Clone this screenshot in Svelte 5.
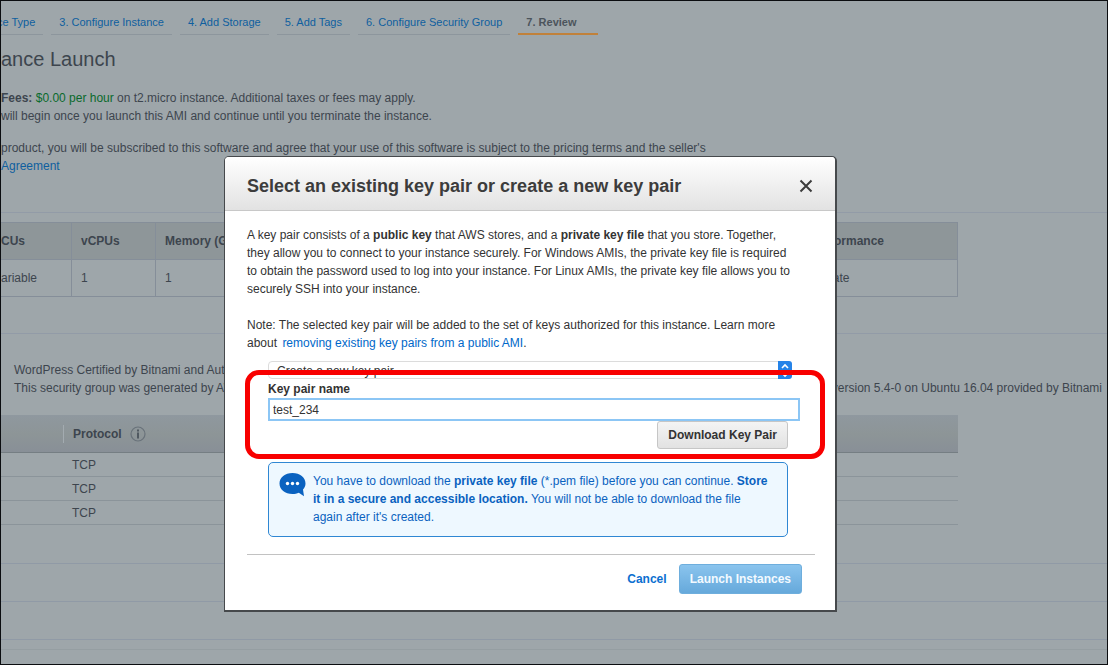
<script lang="ts">
  const steps = ['3. Configure Instance', '4. Add Storage', '5. Add Tags', '6. Configure Security Group'];
  const rules = ['TCP', 'TCP', 'TCP'];

  let option = $state('create');
  let keyName = $state('test_234');
</script>

<div class="page">
  <nav class="steps">
    <a class="first" href="#type">ce Type</a>
    {#each steps as step}
      <a href="#step">{step}</a>
    {/each}
    <a class="active" href="#review">7. Review</a>
  </nav>

  <h1>ance Launch</h1>

  <p class="fees">
    <strong>Fees:</strong> <span class="price">$0.00 per hour</span> on t2.micro instance. Additional taxes or fees may apply.<br />
    will begin once you launch this AMI and continue until you terminate the instance.
  </p>
  <p class="terms">
    product, you will be subscribed to this software and agree that your use of this software is subject to the pricing terms and the seller's<br />
    <a href="#agreement">Agreement</a>
  </p>

  <section class="instance">
    <table class="types">
      <thead>
        <tr><th class="c1">CUs</th><th class="c2">vCPUs</th><th>Memory (GiB)</th><th class="c4">Network Performance</th></tr>
      </thead>
      <tbody>
        <tr><td>ariable</td><td>1</td><td>1</td><td>Low to Moderate</td></tr>
      </tbody>
    </table>
  </section>

  <section class="security">
    <div class="group">
      <div>WordPress Certified by Bitnami and Automattic</div>
      <div class="split">
        <span>This security group was generated by AWS</span>
        <span>version 5.4-0 on Ubuntu 16.04 provided by Bitnami</span>
      </div>
    </div>
    <table class="rules">
      <thead>
        <tr>
          <th class="type"></th>
          <th>
            <span class="protocol">
              Protocol
              <svg width="16" height="16" viewBox="0 0 16 16" aria-hidden="true">
                <circle cx="8" cy="8" r="7" fill="none" stroke="#69727a" stroke-width="1.2" />
                <rect x="7" y="3.500" width="2" height="2" fill="#505961" />
                <rect x="7" y="6.500" width="2" height="6" fill="#505961" />
              </svg>
            </span>
          </th>
        </tr>
      </thead>
      <tbody>
        {#each rules as rule}
          <tr><td></td><td>{rule}</td></tr>
        {/each}
      </tbody>
    </table>
  </section>

  <div class="fold"></div>
  <div class="fold"></div>
  <div class="fold last"></div>

  <div class="overlay">
    <div class="dialog" role="dialog" aria-labelledby="dialog-title">
      <header>
        <h2 id="dialog-title">Select an existing key pair or create a new key pair</h2>
        <button class="close" aria-label="Close">
          <svg width="14" height="14" viewBox="0 0 14 14">
            <path d="M1.5 1.5L12.5 12.5M12.5 1.5L1.5 12.5" stroke="#3c3c3c" stroke-width="2" />
          </svg>
        </button>
      </header>

      <div class="body">
        <p>
          A key pair consists of a <strong>public key</strong> that AWS stores, and a <strong>private key file</strong> that you store. Together,<br />
          they allow you to connect to your instance securely. For Windows AMIs, the private key file is required<br />
          to obtain the password used to log into your instance. For Linux AMIs, the private key file allows you to<br />
          securely SSH into your instance.
        </p>
        <p>
          Note: The selected key pair will be added to the set of keys authorized for this instance. Learn more<br />
          about <a href="#remove">removing existing key pairs from a public AMI</a>.
        </p>

        <form onsubmit={(e) => e.preventDefault()}>
          <div class="select">
            <select bind:value={option} aria-label="Key pair option">
              <option value="create">Create a new key pair</option>
              <option value="existing">Choose an existing key pair</option>
            </select>
            <svg width="14" height="18" viewBox="0 0 14 18" aria-hidden="true">
              <path d="M0 0H11Q14 0 14 3V15Q14 18 11 18H0Z" fill="#2583e8" />
              <path d="M4 7L7 4L10 7M4 12L7 15L10 12" fill="none" stroke="#fff" stroke-width="1.6" />
            </svg>
          </div>
          <label for="key-name">Key pair name</label>
          <input id="key-name" type="text" bind:value={keyName} />
          <button class="download" type="button">Download Key Pair</button>
          <div class="highlight"></div>
        </form>

        <div class="notice">
          <svg width="27" height="25" viewBox="0 0 27 25" aria-hidden="true">
            <path d="M13.5 1C6 1 .5 5.4 .5 11.5S6 22 13.5 22C15.8 22 18 21.6 19.8 20.7L25 24.2L24 17.5C25.6 15.8 26.5 13.7 26.5 11.5C26.5 5.4 21 1 13.5 1Z" fill="#0a62c0" />
            <circle cx="8.5" cy="11.5" r="1.7" fill="#fff" />
            <circle cx="13.5" cy="11.5" r="1.7" fill="#fff" />
            <circle cx="18.5" cy="11.5" r="1.7" fill="#fff" />
          </svg>
          <p>
            You have to download the <strong>private key file</strong> (*.pem file) before you can continue. <strong>Store<br />
            it in a secure and accessible location.</strong> You will not be able to download the file<br />
            again after it's created.
          </p>
        </div>

        <footer>
          <button class="cancel">Cancel</button>
          <button class="launch">Launch Instances</button>
        </footer>
      </div>
    </div>
  </div>
</div>

<style>
  :global(body) {
    margin: 0;
    background: #9ea6aa;
  }

  .page {
    position: relative;
    box-sizing: border-box;
    min-height: 100vh;
    overflow: hidden;
    border: 1px solid #0b0d10;
    background: #9ea6aa;
    color: #3d454e;
    font: 12px/18px 'Liberation Sans', Arial, sans-serif;
  }

  p,
  h1,
  h2 {
    margin: 0;
  }

  a {
    color: #0f5f9f;
    text-decoration: none;
  }

  button,
  input,
  select {
    font: inherit;
    color: inherit;
  }

  button {
    cursor: pointer;
  }

  /* Wizard steps */
  .steps {
    display: flex;
    gap: 8px;
    margin-left: -4px;
    font-size: 11px;
  }

  .steps a {
    padding: 12px 8px 2px;
    border-bottom: 1px solid #8d969d;
    white-space: nowrap;
  }

  .steps .first {
    padding-left: 0;
  }

  .steps .active {
    padding-right: 22px;
    border-bottom: 2px solid #c1813a;
    color: #4c545c;
    font-weight: bold;
  }

  h1 {
    margin-top: 12px;
    font-size: 20px;
    font-weight: normal;
    line-height: 24px;
  }

  .fees {
    margin-top: 18px;
  }

  .price {
    color: #0a6a2c;
  }

  .terms {
    margin-top: 14px;
    white-space: nowrap;
  }

  table {
    width: 957px;
    border-collapse: collapse;
    table-layout: fixed;
  }

  th,
  td {
    padding: 0 9px;
    text-align: left;
    white-space: nowrap;
  }

  .instance {
    margin-top: 37px;
    padding: 9px 0 36px;
    border-top: 1px solid #929ba7;
  }

  .types th,
  .types td {
    height: 36px;
    border: 1px solid #858e99;
  }

  .types tr > :first-child {
    padding-left: 0;
    border-left: none;
  }

  .types th {
    background: #8e9699;
  }

  .types .c1 {
    width: 61px;
  }

  .types .c2 {
    width: 65px;
  }

  .types .c4 {
    width: 188px;
  }

  .security {
    padding: 27px 0 1px;
    border-top: 1px solid #929ba7;
  }

  .group {
    padding: 0 5px 0 13px;
  }

  .split {
    display: flex;
    justify-content: space-between;
  }

  .rules {
    margin-top: 18px;
  }

  .rules thead {
    background: linear-gradient(#8f989f, #8d9597 50%, #888f97);
  }

  .rules th {
    height: 37px;
    padding: 0;
    border-bottom: 1px solid #757e83;
  }

  .rules .type {
    width: 62px;
  }

  .rules td {
    height: 23px;
    border-bottom: 1px solid #8b949a;
  }

  .protocol {
    display: flex;
    align-items: center;
    gap: 8px;
    padding-left: 9px;
    border-left: 1px solid #a3abb0;
  }

  .fold {
    height: 37px;
    border-bottom: 1px solid #909aa6;
  }

  .fold.last {
    box-shadow: 0 9px #9ea6aa, 0 10px #959ea2;
  }

  /* Key pair dialog */
  .overlay {
    position: absolute;
    inset: 0;
    padding: 155px 270px 52px 223px;
  }

  .dialog {
    border: 2px solid #46494c;
    border-width: 1px 2px 2px 1px;
    border-radius: 5px 5px 0 0;
    background: #fff;
    color: #333;
  }

  header {
    display: flex;
    align-items: center;
    justify-content: space-between;
    height: 54px;
    padding: 5px 22px 0;
    box-sizing: border-box;
    border-bottom: 1px solid #c8c8c8;
    border-radius: 4px 4px 0 0;
    background: linear-gradient(#fff, #e2e2e2);
  }

  h2 {
    color: #3c3c3c;
    font-size: 18px;
    line-height: 24px;
  }

  .close {
    display: flex;
    padding: 0;
    border: none;
    background: none;
  }

  .body {
    padding: 15px 20px 16px 22px;
  }

  .body p + p {
    margin-top: 18px;
  }

  .body a {
    margin-left: 2px;
    color: #0068c9;
  }

  form {
    position: relative;
    display: flex;
    flex-direction: column;
    margin: 9px 15px 0 21px;
  }

  .select {
    position: relative;
    display: flex;
    margin-right: 8px;
  }

  select {
    width: 100%;
    height: 18px;
    padding: 0 8px;
    border: 1px solid #dcdcdc;
    border-radius: 4px;
    background: #fff;
    appearance: none;
  }

  .select svg {
    position: absolute;
    top: 0;
    right: 0;
    pointer-events: none;
  }

  label {
    margin-top: 1px;
    font-weight: bold;
  }

  input {
    box-sizing: border-box;
    height: 23px;
    padding: 0 3px;
    border: 2px solid #8cc6f5;
    outline: none;
  }

  .download {
    align-self: flex-end;
    height: 28px;
    margin-right: 12px;
    padding: 0 10px;
    border: 1px solid #c6c6c6;
    border-radius: 3px;
    background: linear-gradient(#f4f4f4, #e2e2e2);
    font-weight: bold;
  }

  /* Red frame around the name field and its button */
  .highlight {
    position: absolute;
    inset: 9px -25px -10px -23px;
    border: 5px solid #f80000;
    border-radius: 14px;
    pointer-events: none;
  }

  .notice {
    display: flex;
    align-items: flex-start;
    gap: 7px;
    margin: 13px 27px 0 21px;
    padding: 9px 6px 10px 10px;
    border: 1px solid #2f87d3;
    border-radius: 5px;
    background: #eef8ff;
    color: #0a62c0;
  }

  .notice svg {
    flex: none;
  }

  footer {
    display: flex;
    justify-content: flex-end;
    gap: 12px;
    margin-top: 17px;
    padding: 9px 13px 0 0;
    border-top: 1px solid #c2c2c2;
  }

  .cancel {
    padding: 0;
    border: none;
    background: none;
    color: #0c6fd0;
    font-weight: bold;
  }

  .launch {
    height: 30px;
    padding: 0 10px;
    border: 1px solid #6eaedd;
    border-radius: 3px;
    background: linear-gradient(#8ac4ee, #66a9db);
    color: #f3faff;
    font-weight: bold;
  }
</style>
